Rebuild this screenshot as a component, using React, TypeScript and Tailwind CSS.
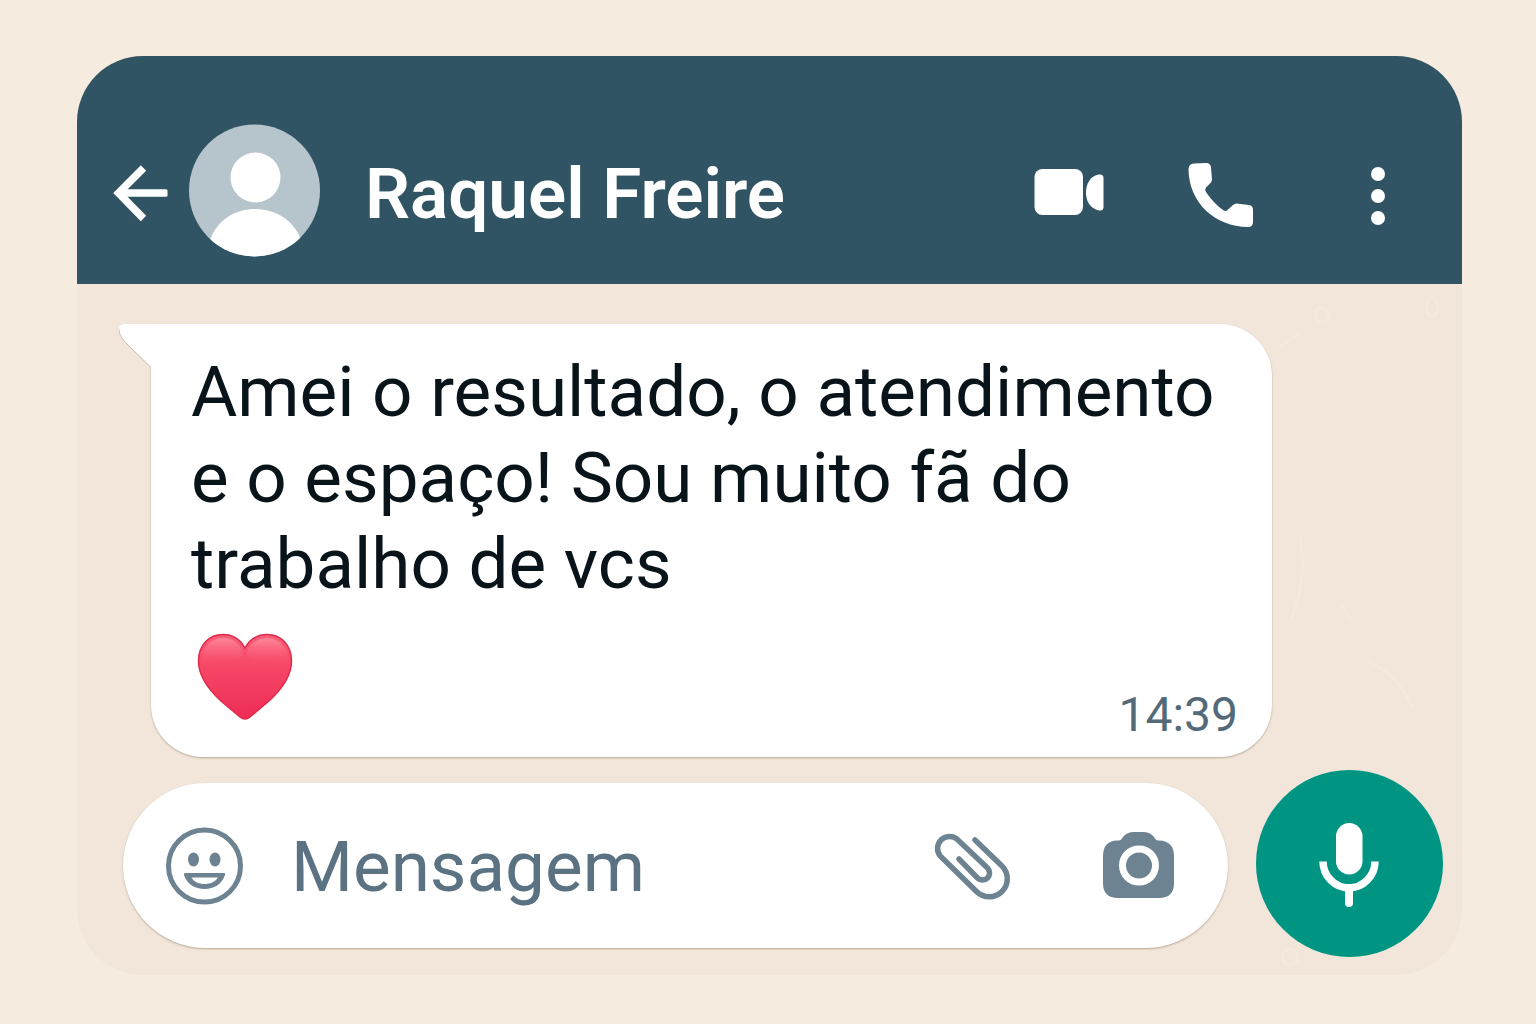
import React from "react";

function ChatHeader() {
  return (
    <header className="flex h-[228px] items-center bg-[#305463] pt-10 pr-[76px] pl-9 text-white">
      <button type="button" aria-label="Voltar" className="mr-5 shrink-0">
        <svg width="56" height="66" viewBox="0 0 56 66" fill="none" stroke="currentColor" strokeWidth="7.5">
          <path d="M30.500 11 5.500 36 30.500 61.500" />
          <path d="M8 32.250H53q1.500 0 1.500 1.500V38.250q0 1.500-1.500 1.500H8z" fill="currentColor" stroke="none" />
        </svg>
      </button>
      <svg className="mr-11 shrink-0" width="132" height="134" viewBox="0 0 132 134" role="img" aria-label="Foto de perfil">
        <defs>
          <clipPath id="avatar-clip">
            <ellipse cx="65.500" cy="67.500" rx="65.500" ry="66" />
          </clipPath>
        </defs>
        <g clipPath="url(#avatar-clip)">
          <rect width="132" height="134" fill="#b6c4cb" />
          <circle cx="66.500" cy="54.500" r="25" fill="#fff" />
          <path d="M21 117C29 95 48 86 66 86s38 9 46 31v20H21z" fill="#fff" />
        </g>
      </svg>
      <h1 className="grow pt-2 text-[71px] leading-[84px] font-semibold whitespace-nowrap">Raquel Freire</h1>
      <button type="button" aria-label="Chamada de vídeo" className="mr-[84px] shrink-0">
        <svg width="70" height="50" viewBox="0 0 70 50" fill="currentColor">
          <rect x="0.500" y="4" width="48.500" height="46" rx="8" />
          <path d="M65 9.500q4.500-.5 4.500 3.500v29q0 4-4.500 3.500C56 43.500 52 36 52 27.500S56 11 65 9.500z" />
        </svg>
      </button>
      <button type="button" aria-label="Ligar" className="mr-[116px] shrink-0">
        <svg width="66" height="76" viewBox="0 -10 66 76" fill="currentColor">
          <path d="M6 1.500 18 1q4.500 0 5 4.500l1 12q0 2-1.500 3.500L18 25.500q-1.500 2 0 4.500C23 38 29 43.500 35 48q2.500 2 4.500 0l5.500-5q1.500-1.500 3.500-1.500L61 43q4 .5 4 5V60q0 5-5 5C27 64.500 1 41 .5 7.500Q.5 2 6 1.500z" />
        </svg>
      </button>
      <button type="button" aria-label="Mais opções" className="shrink-0">
        <svg width="16" height="72" viewBox="0 0 16 72" fill="currentColor">
          <circle cx="8" cy="20" r="7" />
          <circle cx="8" cy="42" r="7" />
          <circle cx="8" cy="64" r="7" />
        </svg>
      </button>
    </header>
  );
}

function Heart() {
  return (
    <svg className="ml-1.5" width="96" height="88" viewBox="0 0 96 88" role="img" aria-label="Coração">
      <defs>
        <linearGradient id="heart-fill" x1="0" y1="0" x2="0" y2="1">
          <stop offset="0" stopColor="#f9607a" />
          <stop offset="0.400" stopColor="#f64666" />
          <stop offset="1" stopColor="#ee2c54" />
        </linearGradient>
        <linearGradient id="heart-shine" x1="0" y1="0" x2="0" y2="1">
          <stop offset="0" stopColor="#ff98a8" stopOpacity="0.700" />
          <stop offset="1" stopColor="#fb6178" stopOpacity="0" />
        </linearGradient>
      </defs>
      <path
        d="M48 15C43 6 35 1.500 26 1.500 12 1.500 1.500 12 1.500 28 1.500 43 11 56 24 68 31 74 37 79 43 84q5 4 10 0C59 79 65 74 72 68 85 56 94.500 43 94.500 28 94.500 12 84 1.500 70 1.500 61 1.500 53 6 48 15z"
        fill="url(#heart-fill)"
        stroke="#dd2b4b"
        strokeWidth="1.500"
      />
      <path d="M5 25C6 13 15 5 26 5c9 0 16 4.500 20 14 0 10-10 9-20 9S5 33 5 25z" fill="url(#heart-shine)" />
      <path d="M50 19c4-9.500 11-14 20-14 11 0 20 8 21 20 0 8-11 3-21 3s-20 1-20-9z" fill="url(#heart-shine)" />
    </svg>
  );
}

function MessageBubble() {
  return (
    <article className="relative mr-[190px] ml-[74px] rounded-[52px] rounded-tl-none bg-white pt-[25px] pr-[34px] pb-[14px] pl-10 shadow-[0_1px_2px_#b9a99a]">
      <svg className="absolute top-0 -left-8" width="33" height="46" viewBox="0 0 33 46" aria-hidden="true">
        <path d="M33 0H6Q0 0 0 5c0 5 3 10 9 16l23 22.500h1z" fill="#fff" />
        <path d="M0 5c0 5 3 10 9 16l23 22.500" fill="none" stroke="#cbbdaf" />
      </svg>
      <p className="max-w-[1040px] text-[71px] leading-[86px] text-[#08141a]">
        Amei o resultado, o atendimento e o espaço! Sou muito fã do trabalho de vcs
      </p>
      <div className="flex items-end justify-between pt-[26px]">
        <div className="pb-[22px]">
          <Heart />
        </div>
        <time className="text-[48px] leading-[56px] text-[#536a79]">14:39</time>
      </div>
    </article>
  );
}

function Composer() {
  return (
    <form className="mt-[13px] mr-[19px] ml-[46px] flex items-center gap-7" onSubmit={(e) => e.preventDefault()}>
      <div className="mt-1 flex h-[165px] min-w-0 grow items-center rounded-full bg-white pr-[54px] pl-[42px] text-[#6d8391] shadow-[0_1px_2px_#b9a99a]">
        <button type="button" aria-label="Emojis" className="mr-12 shrink-0">
          <svg width="78" height="78" viewBox="0 0 78 78" fill="none" stroke="currentColor">
            <circle cx="39.500" cy="39" r="36" strokeWidth="5" />
            <ellipse cx="28.500" cy="32.500" rx="5.500" ry="7" fill="currentColor" stroke="none" />
            <ellipse cx="50" cy="32.500" rx="5.500" ry="7" fill="currentColor" stroke="none" />
            <path
              d="M20 46H59.500q1 0 .5 2C57 57 49 62 39.500 62S22 57 19 48q-.5-2 1-2zM26.500 50.500C29 55 34 57 39.500 57S50 55 53 50.500z"
              fill="currentColor"
              stroke="none"
              fillRule="evenodd"
            />
          </svg>
        </button>
        <input
          type="text"
          aria-label="Mensagem"
          placeholder="Mensagem"
          className="h-[88px] min-w-0 grow bg-transparent pt-0.5 text-[71px] leading-[84px] text-[#08141a] outline-none placeholder:text-[#5a7282]"
        />
        <button type="button" aria-label="Anexar" className="mr-[91px] shrink-0">
          <svg width="78" height="70" viewBox="0 0 78 70" fill="none" stroke="currentColor" strokeWidth="5.500" strokeLinecap="round">
            <path d="M42 9 69 35A18 18 0 0 1 43.500 60.500L7.400 25.200A12 12 0 0 1 24.200 8.200L54.500 37A7 7 0 0 1 44.500 47L26 28" />
          </svg>
        </button>
        <button type="button" aria-label="Câmera" className="shrink-0">
          <svg width="72" height="70" viewBox="0 0 72 70">
            <path
              d="M15 9.500h2q2 0 3-2Q24 1 31 1h11q7 0 11 6.500 1 2 3 2h1Q72 10 72 25v27q0 15-15 15H16Q1 67 1 52V25Q1 10 15 9.500z"
              fill="currentColor"
            />
            <circle cx="37" cy="34.500" r="16.500" fill="none" stroke="#fff" strokeWidth="7" />
          </svg>
        </button>
      </div>
      <button
        type="button"
        aria-label="Gravar áudio"
        className="flex size-[187px] shrink-0 items-center justify-center rounded-full bg-[#009583] text-white"
      >
        <svg width="62" height="86" viewBox="0 0 62 86" fill="none" stroke="currentColor">
          <rect x="17" y="2" width="26.500" height="51.500" rx="13.250" fill="currentColor" stroke="none" />
          <path d="M4 40.500C4 55 16 67 30 67S56 55 56 40.500" strokeWidth="7.500" />
          <path d="M30 67V82" strokeWidth="8" strokeLinecap="round" />
        </svg>
      </button>
    </form>
  );
}

function WallpaperDoodles() {
  return (
    <svg
      className="pointer-events-none absolute right-0 bottom-0"
      width="192"
      height="690"
      viewBox="0 0 192 690"
      fill="none"
      stroke="#f3e9dd"
      strokeWidth="3"
      strokeLinecap="round"
      aria-hidden="true"
    >
      <circle cx="52" cy="30" r="7" />
      <ellipse cx="162" cy="22" rx="6" ry="9" />
      <path d="M10 62 28 49" />
      <path d="M30 252c5 26 3 52-8 80" />
      <path d="M98 376c22 10 34 24 44 46" />
      <path d="M72 321 80 333" />
      <circle cx="20" cy="672" r="8" />
    </svg>
  );
}

export default function App() {
  return (
    <div className="min-h-screen bg-[#f5ecdf] pt-14 pr-[74px] pb-[50px] pl-[77px] font-['Roboto',sans-serif]">
      <main className="overflow-hidden rounded-[66px] bg-[#f1e6d9]">
        <ChatHeader />
        <section className="relative pt-10 pb-[18px]">
          <WallpaperDoodles />
          <MessageBubble />
          <Composer />
        </section>
      </main>
    </div>
  );
}
